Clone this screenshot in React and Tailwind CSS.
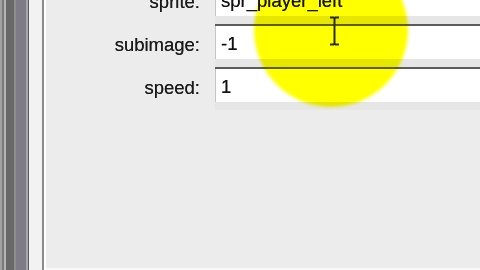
const stripes = [
  "w-[2px] bg-[#a2a2a2]",
  "w-[2px] bg-[#7a7a7a]",
  "w-[2px] bg-[#b4b4b4]",
  "w-[8px] bg-[#686868]",
  "w-[2px] bg-[#8e8e8e]",
  "w-[10px] bg-[#7e7a88]",
  "w-[2px] bg-[#a8a6ac]",
  "w-[1px] bg-[#5a5a5a]",
  "w-[13px] bg-[#f2f2f2]",
  "w-[2px] bg-[#8a8a8a]",
  "w-[2px] bg-[#ffffff]",
];

const rows = [
  { label: "sprite:", value: "spr_player_left" },
  { label: "subimage:", value: "-1" },
  { label: "speed:", value: "1" },
];

const Field = ({ label, value }) => (
  <div className="flex items-stretch h-[43px]">
    <div className="w-[169px] shrink-0 flex items-center justify-end pr-[15px] pb-[2px] text-[18.5px] text-[#1a1a1a] [text-shadow:0_0_0.6px_#333]">
      {label}
    </div>
    <div className="flex-1 flex flex-col">
      <div className="h-[2px] bg-[#5c5c5c]" />
      <div className="h-[33px] bg-white border-l border-[#c4c4c4] flex items-center pl-[5px] pt-[2px] text-[18.5px] text-[#111] [text-shadow:0_0_0.6px_#333]">
        {value}
      </div>
      <div className="h-[8px] bg-[#e6e6e6]" />
    </div>
  </div>
);

export default function App() {
  return (
    <div
      className="relative w-[480px] h-[270px] overflow-hidden bg-[#ececec] flex"
      style={{ fontFamily: '"Liberation Sans", Arial, sans-serif' }}
    >
      <div className="flex shrink-0 h-full">
        {stripes.map((s, i) => (
          <div key={i} className={s} />
        ))}
      </div>

      <div className="flex-1 flex flex-col border-b-2 border-[#f7f7f7]">
        <div className="-mt-[19px]">
          {rows.map((r) => (
            <Field key={r.label} label={r.label} value={r.value} />
          ))}
        </div>
      </div>

      {/* highlight spot around the cursor */}
      <div className="absolute left-[254px] top-[-47px] w-[154px] h-[154px] rounded-full bg-[#ffff00] mix-blend-multiply blur-[1.5px]" />

      {/* text cursor */}
      <svg
        className="absolute left-[328px] top-[16px]"
        width="13"
        height="30"
        viewBox="0 0 13 30"
      >
        <path
          d="M2 1.5h3.5l1 1 1-1H11M2 28.5h3.5l1-1 1 1H11M6.5 2.5v25"
          stroke="#2a2a2a"
          strokeWidth="2"
          fill="none"
        />
      </svg>
    </div>
  );
}
